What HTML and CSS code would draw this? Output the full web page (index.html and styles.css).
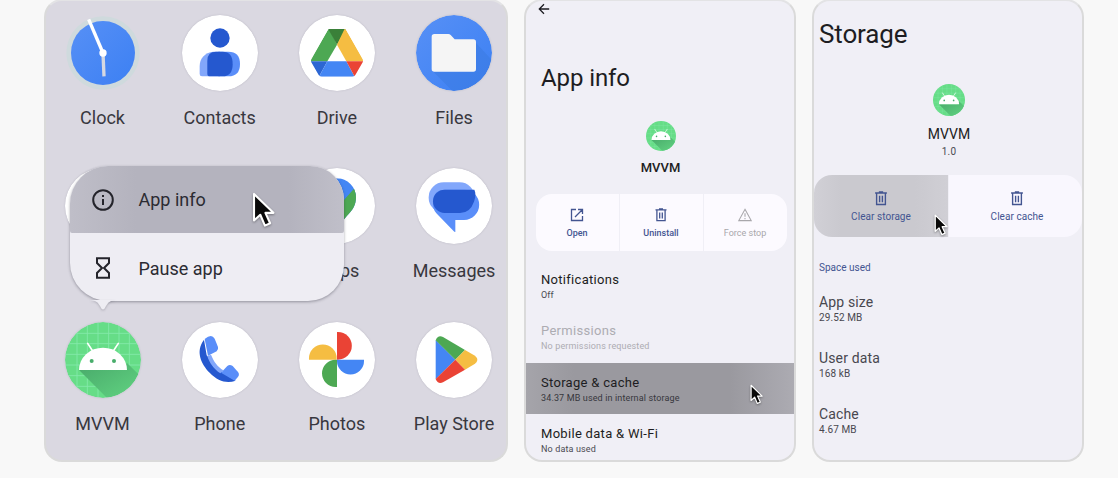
FILE: index.html
```html
<!DOCTYPE html>
<html lang="en">
<head>
<meta charset="utf-8">
<title>Clear app storage</title>
<link rel="stylesheet" href="styles.css">
</head>
<body>
<svg class="defs" aria-hidden="true">
  <defs>
    <clipPath id="disc"><circle r="114"/></clipPath>
    <clipPath id="driveHull"><path d="M-22-72H22Q26-72 28-68L77 19Q79 24 77 28L55 66Q52 71 46 71H-46Q-52 71-55 66L-77 28Q-79 24-77 19L-28-68Q-26-72-22-72Z"/></clipPath>
    <clipPath id="pin"><path d="M0-83A57 57 0 0 1 57-26C57 22 14 30 0 78C-14 30-57 22-57-26A57 57 0 0 1 0-83Z"/></clipPath>
    <linearGradient id="cast" x1="0" y1="0" x2="1" y2="1"><stop offset="0" stop-color="#48a96a"/><stop offset="1" stop-color="#62d482"/></linearGradient>
    <linearGradient id="blue" x1="0" y1="0" x2="1" y2="1"><stop offset="0" stop-color="#5790f6"/><stop offset="1" stop-color="#3c80f3"/></linearGradient>
    <symbol id="android" viewBox="-114 -114 228 228">
      <circle r="114" fill="#66dd87"/>
      <g clip-path="url(#disc)">
        <path d="M-78-114V114M-47-114V114M-15-114V114M17-114V114M48-114V114M79-114V114M-114-80H114M-114-49H114M-114-17H114M-114 15H114M-114 47H114M-114 79H114" stroke="#86e9ac" stroke-width="2.5"/>
        <path d="M-72 30L12 114H114V50L72 9L60 30Z" fill="url(#cast)"/>
      </g>
      <path d="M-72 30A72 67 0 0 1 72 30Z" fill="#fff"/>
      <path d="M-46-50L-31-27M46-50L31-27" stroke="#fff" stroke-width="5" stroke-linecap="round"/>
      <circle cx="-34" cy="3" r="6" fill="#48ad6b"/><circle cx="33" cy="3" r="6" fill="#48ad6b"/>
    </symbol>
    <symbol id="trash" viewBox="0 0 12 14">
      <path d="M.5 1.9H11.5M4 .8H8M1.9 2V12.6H10.1V2M4.7 4.5V10.5M7.3 4.5V10.5" fill="none" stroke="currentColor" stroke-width="1.3"/>
    </symbol>
    <symbol id="cursor" viewBox="0 0 24 38">
      <path d="M2 2V30L8.600 24L13.500 35.500L19 33L14 22H22.500Z" fill="#090909" stroke="#fff" stroke-width="2.200" stroke-linejoin="round"/>
    </symbol>
  </defs>
</svg>
<main class="stage">
  <section class="panel home">
    <div class="app"><svg class="app-icon clock" viewBox="-114 -114 228 228"><circle r="110" fill="#cfdadd"/><circle r="96" fill="url(#blue)"/><path d="M0 0L3 70" stroke="#d6d9e1" stroke-width="10"/><path d="M0 0L-43-101" stroke="#fff" stroke-width="10"/><circle r="11" fill="#fff"/></svg><span>Clock</span></div>
    <div class="app"><svg class="app-icon" viewBox="-114 -114 228 228"><circle r="114" fill="#fff"/><circle cy="-45" r="29" fill="#2558cf"/><path d="M-20-4C-46-2-61 17-61 39V63Q-61 70-54 70H0V-4Z" fill="#82a7fb"/><path d="M-5-4H25Q60-4 60 33Q60 70 25 70H-5Z" fill="#5a8ef9"/><path d="M-12-4H8Q38-4 38 33Q38 70 8 70H-30Q-38 70-38 62V23Q-38-4-12-4Z" fill="#2558cf"/></svg><span>Contacts</span></div>
    <div class="app"><svg class="app-icon" viewBox="-114 -114 228 228"><circle r="114" fill="#fff"/><g clip-path="url(#driveHull)"><path d="M-82 25L-24-75L0-25L-29 25Z" fill="#4da853"/><path d="M-27-73H27L0-25Z" fill="#3a8039"/><path d="M24-75L82 25H28L0-25Z" fill="#f5bd42"/><path d="M-82 25H-29L-55 73Z" fill="#2c66d3"/><path d="M-29 25H28L54 73H-55Z" fill="#4486f4"/><path d="M28 25H82L54 73Z" fill="#ea4335"/></g></svg><span>Drive</span></div>
    <div class="app"><svg class="app-icon" viewBox="-114 -114 228 228"><circle r="114" fill="url(#blue)"/><path clip-path="url(#disc)" d="M-62 56L0 118H114V22L66-30V56Z" fill="#397adf" opacity=".5"/><path d="M-59-57H-17Q-13-57-10-54L2-41H58Q66-41 66-33V48Q66 56 58 56H-59Q-67 56-67 48V-49Q-67-57-59-57Z" fill="#f5f5f5"/></svg><span>Files</span></div>

    <div class="app"><svg class="app-icon" viewBox="-114 -114 228 228"><circle r="114" fill="#fff"/></svg></div>
    <div class="app"></div>
    <div class="app"><svg class="app-icon" viewBox="-114 -114 228 228"><circle r="114" fill="#fff"/><g clip-path="url(#pin)"><rect x="-60" y="-90" width="120" height="170" fill="#4486f4"/><path d="M60-62L-40 50V90H60Z" fill="#4da853"/></g></svg><span>Maps</span></div>
    <div class="app"><svg class="app-icon" viewBox="-114 -114 228 228"><circle r="114" fill="#fff"/><rect x="-76" y="-71" width="138" height="91" rx="45" fill="#82a7fb"/><path d="M-63-3V-15Q-60-49-27-49H30A45.500 45.500 0 0 1 30 42H4V78Q1 78-2 74L-45 30Q-63 14-63-3Z" fill="#5a8ef9"/><path d="M-28-49H61Q68-36 60-13Q48 21 18 21H-28A35 35 0 0 1-28-49Z" fill="#2558cf"/></svg><span>Messages</span></div>

    <div class="app"><svg class="app-icon"><use href="#android"/></svg><span>MVVM</span></div>
    <div class="app"><svg class="app-icon" viewBox="-114 -114 228 228"><circle r="114" fill="#fff"/><path d="M-48-61C-75-26-56 13-31 38C-6 64 20 71 47 62L6 36L-40-14Z" fill="#2558cf"/><path d="M-38-12L-27-16C-18 6-8 19 10 31L1 40C-18 28-33 7-38-12Z" fill="#82a7fb"/><path d="M-46-63Q-25-81-16-64L-6-39Q-4-31-10-26L-36-13Z" fill="#5a8ef9"/><path d="M3 38L22 18Q29 12 38 18L54 36Q60 44 53 52L44 62Z" fill="#5a8ef9"/></svg><span>Phone</span></div>
    <div class="app"><svg class="app-icon" viewBox="-114 -114 228 228"><circle r="114" fill="#fff"/><path d="M0-84H3A41 41 0 0 1 3-1H0Z" fill="#ea4335"/><path d="M-84-1V-5A41 41 0 0 1-1-5V-1Z" fill="#f5bd42"/><path d="M0-1V81H-4A41 41 0 0 1-4-1Z" fill="#4da853"/><path d="M0-1H81V3A40 40 0 0 1 0 3Z" fill="#4486f4"/></svg><span>Photos</span></div>
    <div class="app"><svg class="app-icon" viewBox="-114 -114 228 228"><circle r="114" fill="#fff"/><path d="M-55-60L4-1L-55 58Z" fill="#4486f4"/><path d="M-55-59Q-48-76-33-69L33-30L4-1Z" fill="#4da853"/><path d="M33-30L63-13Q77-1 63 11L33 29L4-1Z" fill="#f5bd42"/><path d="M4-1L33 29L-33 67Q-48 74-55 57Z" fill="#ea4335"/></svg><span>Play Store</span></div>

    <div class="popup">
      <div class="popup-item hover">
        <svg class="popup-icon" viewBox="0 0 24 24" fill="none" stroke="#24242b" stroke-width="2"><circle cx="12" cy="12" r="9.800"/><path d="M12 11V17M12 7V9"/></svg>
        <span>App info</span>
      </div>
      <div class="popup-item">
        <svg class="popup-icon" viewBox="0 0 24 24" fill="none" stroke="#24242b" stroke-width="2"><path d="M6 2.200H18V7L13 12L18 17V21.800H6V17L11 12L6 7Z"/></svg>
        <span>Pause app</span>
      </div>
      <svg class="popup-tail" viewBox="0 0 26 12"><path d="M0 0H26L21 1Q18 2 16 6Q13 13 10 6Q8 2 5 1Z" fill="#eeedf3"/></svg>
    </div>
    <svg class="cursor cursor-home"><use href="#cursor"/></svg>
  </section>

  <section class="panel info">
    <svg class="back" viewBox="0 0 12 12" fill="none" stroke="#1b1b20" stroke-width="1.300"><path d="M11.200 6H1.500M6 1.200L1.300 6L6 10.800"/></svg>
    <h1 class="title">App info</h1>
    <div class="identity"><svg class="logo"><use href="#android"/></svg><strong class="app-name">MVVM</strong></div>
    <div class="actions">
      <div class="action"><svg class="action-icon" viewBox="0 0 14 14" fill="none" stroke="currentColor" stroke-width="1.300"><path d="M6 1.500H1.500V12.500H12.500V8M8 1.500H12.500V6M12.500 1.500L5 9"/></svg><span>Open</span></div>
      <div class="action"><svg class="action-icon"><use href="#trash"/></svg><span>Uninstall</span></div>
      <div class="action disabled"><svg class="action-icon" viewBox="0 0 14 14" fill="none" stroke="currentColor" stroke-width="1.100"><path d="M7 1.300L13.200 12.600H.8ZM7 5.200V8.800M7 9.900V11.200"/></svg><span>Force stop</span></div>
    </div>
    <div class="settings">
      <div class="setting"><b>Notifications</b><small>Off</small></div>
      <div class="setting disabled"><b>Permissions</b><small>No permissions requested</small></div>
      <div class="setting pressed"><b>Storage &amp; cache</b><small>34.37 MB used in internal storage</small></div>
      <div class="setting"><b>Mobile data &amp; Wi-Fi</b><small>No data used</small></div>
    </div>
    <svg class="cursor cursor-info"><use href="#cursor"/></svg>
  </section>

  <section class="panel storage">
    <h1 class="title">Storage</h1>
    <div class="identity"><svg class="logo"><use href="#android"/></svg><span class="app-name">MVVM</span><small class="version">1.0</small></div>
    <div class="actions">
      <div class="action pressed"><svg class="action-icon"><use href="#trash"/></svg><span>Clear storage</span></div>
      <div class="action"><svg class="action-icon"><use href="#trash"/></svg><span>Clear cache</span></div>
    </div>
    <h2 class="group">Space used</h2>
    <div class="stats">
      <div class="stat"><b>App size</b><small>29.52 MB</small></div>
      <div class="stat"><b>User data</b><small>168 kB</small></div>
      <div class="stat"><b>Cache</b><small>4.67 MB</small></div>
    </div>
    <svg class="cursor cursor-storage"><use href="#cursor"/></svg>
  </section>
</main>
</body>
</html>
```
FILE: styles.css
```css
* { box-sizing: border-box; }
body { margin: 0; background: #fff; font-family: Roboto, sans-serif; overflow: hidden; }
svg { display: block; flex: none; }
h1, h2 { margin: 0; font-weight: 400; }
b, small { display: block; font-weight: 400; }
.defs { position: absolute; width: 0; height: 0; }
.stage { display: flex; gap: 16px; height: 478px; padding-left: 44px; background: #f8f8f8; }
.panel { position: relative; flex: none; height: 463px; margin-top: -1px; border: 2px solid #dadada; border-top-color: #e3e3e5; border-radius: 18px; background: #f0eff6; overflow: hidden; white-space: nowrap; }

.home { width: 464px; background: #dad8e1; display: grid; grid-template-columns: repeat(4, 76px); grid-auto-rows: 113px; gap: 40.4px 41.2px; padding: 14px 0 0 18.5px; }
.app { display: flex; flex-direction: column; align-items: center; gap: 16.5px; font-size: 18px; line-height: 20px; color: #38373e; }
.app-icon { width: 76px; height: 76px; border-radius: 50%; box-shadow: 0 0 2px rgba(80, 80, 95, .2); }
.app-icon.clock { box-shadow: none; }
.popup { position: absolute; left: 24px; top: 165px; width: 274px; height: 135px; border-radius: 38px 34px 36px 38px; background: #eeedf3; box-shadow: 0 1px 3px rgba(40, 40, 55, .4); }
.popup-item { display: flex; align-items: center; height: 70px; padding: 0 0 0 21px; gap: 23.5px; font-size: 18px; color: #2b2b32; }
.popup-item.hover { height: 67px; border-radius: 38px 34px 2px 2px; background: linear-gradient(90deg, #bfbec8, #b4b3be 24%, #b4b3be 80%, #c0bfc9); }
.popup-icon { width: 24px; height: 24px; }
.popup-tail { position: absolute; left: 20px; top: 134px; width: 26px; height: 12px; filter: drop-shadow(0 1px 1px rgba(40, 40, 55, .25)); }
.cursor { position: absolute; filter: drop-shadow(0 1px 1px rgba(0, 0, 0, .35)); }
.cursor-home { left: 206px; top: 191px; width: 23px; height: 36px; }
.cursor-info { left: 224px; top: 383px; width: 13px; height: 21px; }
.cursor-storage { left: 120px; top: 213px; width: 14px; height: 22px; }

.info, .storage { width: 272px; }
.identity { display: flex; flex-direction: column; align-items: center; color: #1d1d22; }
.actions { display: flex; overflow: hidden; }
.action { flex: 1; display: flex; flex-direction: column; align-items: center; color: #435591; }
.info .back { width: 12px; height: 12px; margin: 2px 0 0 12px; }
.info .title { margin: 48px 0 0 15px; font-size: 24px; line-height: 30px; letter-spacing: -.1px; color: #1d1d22; }
.info .identity { margin: 28px 0 0 1px; }
.info .logo { width: 30px; height: 30px; }
.info .app-name { margin-top: 8.5px; font-size: 13px; line-height: 16px; font-weight: 500; }
.info .actions { margin: 18.5px 7px 0 10px; height: 57px; border-radius: 16px; gap: 1px; }
.info .action { padding: 14px 1px 0 0; gap: 5px; background: #fcfaff; font-size: 9px; line-height: 13px; font-weight: 500; }
.info .action-icon { width: 14px; height: 14px; }
.info .action.disabled { color: #a8a7ab; font-weight: 400; }
.settings { margin-top: 9px; }
.setting { height: 51.3px; padding: 12px 0 0 15px; color: #1d1d22; }
.setting b { font-size: 13px; line-height: 16px; letter-spacing: .3px; }
.setting small { margin-top: 1px; font-size: 9px; line-height: 13px; color: #4a4a51; letter-spacing: .14px; }
.setting.disabled, .setting.disabled small { color: #adacb2; }
.setting.pressed { background: linear-gradient(90deg, #a5a4aa, #9a999f 18%, #9a999f 76%, #acabb2); }
.setting.pressed small { color: #37373d; }

.storage .title { margin: 17px 0 0 5px; font-size: 26px; line-height: 32px; letter-spacing: -.15px; color: #1d1d22; }
.storage .identity { margin: 34px 0 0 2px; }
.storage .logo { width: 32px; height: 32px; }
.storage .app-name { margin-top: 9px; font-size: 14px; line-height: 18px; }
.storage .version { margin-top: 1px; font-size: 10px; line-height: 16px; color: #4a4a51; letter-spacing: .2px; }
.storage .actions { margin-top: 15px; height: 62px; border-radius: 18px; gap: 1px; }
.storage .action { padding: 16px 0 0 3px; gap: 4px; background: #f9f7fe; font-size: 10px; line-height: 14px; letter-spacing: .05px; }
.storage .action.pressed { flex: 0 0 134px; padding-left: 0; background: linear-gradient(90deg, #d1d0d6, #cac9cf 20%, #cac9cf 75%, #d0cfd5); }
.storage .action-icon { width: 14px; height: 15px; }
.group { margin: 24px 0 0 5px; font-size: 10px; line-height: 14px; color: #435591; }
.stats { margin: 18px 0 0 5px; }
.stat { height: 56px; color: #48474f; }
.stat b { font-size: 14px; line-height: 18px; letter-spacing: .15px; }
.stat small { font-size: 10px; line-height: 14px; letter-spacing: .1px; }
```
